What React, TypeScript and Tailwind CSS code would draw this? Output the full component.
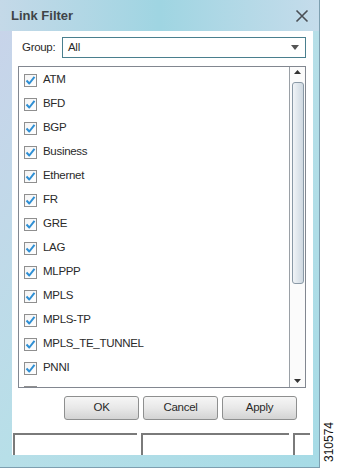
import React from 'react';

const items = [
  "ATM", "BFD", "BGP", "Business", "Ethernet", "FR", "GRE", "LAG",
  "MLPPP", "MPLS", "MPLS-TP", "MPLS_TE_TUNNEL", "PNNI", "PPP/MPLS"
];

const CheckBox = () => (
  <div className="w-[13px] h-[13px] shrink-0 border border-[#8f8f8f] bg-gradient-to-br from-[#f4f4f4] to-white flex items-center justify-center">
    <svg width="11" height="11" viewBox="0 0 11 11">
      <path d="M1.5 5.5 L4.3 8.5 L9.5 1.8" fill="none" stroke="#2f8fd4" strokeWidth="2" strokeLinejoin="round" />
    </svg>
  </div>
);

const Btn = ({ label }: { label: string }) => (
  <div className="w-[75px] h-[24px] rounded-[3px] border border-[#8e8f8f] bg-gradient-to-b from-[#f6f6f6] via-[#e8e8e8] to-[#d3d3d3] flex items-center justify-center text-[11.5px] tracking-[-0.3px] text-[#2a2a2a]">
    {label}
  </div>
);

export default function App() {
  return (
    <div className="w-[338px] h-[468px] bg-white flex font-['Liberation_Sans',sans-serif]">
      <div className="w-[323px] h-[468px] flex flex-col border-r border-b border-[#7d9fb0] bg-gradient-to-br from-[#c9d3ea] via-[#b7dfe8] to-[#a6dbe6]">
        {/* title bar */}
        <div className="h-[31px] flex items-center justify-between pl-[11px] pr-[10px] bg-gradient-to-r from-[#c4d9e8] via-[#9fd5e2] to-[#c5dceb]">
          <span className="text-[13px] font-bold text-[#3f4448]">Link Filter</span>
          <svg width="14" height="14" viewBox="0 0 14 14">
            <path d="M1.5 1.5 L12.5 12.5 M12.5 1.5 L1.5 12.5" stroke="#4a4f55" strokeWidth="1.6" />
          </svg>
        </div>
        {/* panel */}
        <div className="ml-[12px] w-[301px] h-[424px] bg-white flex flex-col text-[11.5px] tracking-[-0.3px] text-[#2a2a2a]">
          <div className="flex items-center mt-[6px] h-[21px]">
            <span className="w-[50px] pl-[10px]">Group:</span>
            <div className="w-[244px] h-[21px] border border-[#4a7f8e] flex items-center justify-between pl-[5px] pr-[6px]">
              <span>All</span>
              <svg width="8" height="5" viewBox="0 0 8 5"><path d="M0 0 H8 L4 5 Z" fill="#555" /></svg>
            </div>
          </div>
          {/* list */}
          <div className="ml-[6px] mt-[8px] w-[288px] h-[323px] border border-[#828790] flex overflow-hidden">
            <div className="flex-1 flex flex-col overflow-hidden pt-[1px]">
              {items.map((it) => (
                <div key={it} className="h-[24px] shrink-0 flex items-center gap-[6px] pl-[5px]">
                  <CheckBox />
                  <span>{it}</span>
                </div>
              ))}
            </div>
            <div className="w-[16px] border-l border-[#9aa0a6] bg-[#fbfbfb] flex flex-col items-center">
              <svg className="mt-[3px]" width="7" height="4" viewBox="0 0 7 4"><path d="M0 4 H7 L3.5 0 Z" fill="#333" /></svg>
              <div className="mt-[8px] w-[12px] h-[202px] rounded-[3px] border border-[#8a99a6] bg-gradient-to-r from-[#f1f4f7] via-[#dfe6ec] to-[#cfd9e1]" />
              <div className="flex-1" />
              <svg className="mb-[4px]" width="7" height="4" viewBox="0 0 7 4"><path d="M0 0 H7 L3.5 4 Z" fill="#333" /></svg>
            </div>
          </div>
          {/* buttons */}
          <div className="flex gap-[4px] ml-[52px] mt-[8px]">
            <Btn label="OK" />
            <Btn label="Cancel" />
            <Btn label="Apply" />
          </div>
          {/* status fields */}
          <div className="flex mt-[13px] h-[22px] gap-[4px] pl-[1px]">
            <div className="w-[124px] border-t-2 border-l-2 border-[#7a7a7a]" />
            <div className="w-[148px] border-t-2 border-l-2 border-[#7a7a7a]" />
            <div className="w-[17px] border-t-2 border-l-2 border-[#7a7a7a]" />
          </div>
        </div>
      </div>
      <div className="flex-1 flex items-end justify-center pb-[6px]">
        <span className="[writing-mode:vertical-rl] rotate-180 text-[12px] text-[#111]">310574</span>
      </div>
    </div>
  );
}
